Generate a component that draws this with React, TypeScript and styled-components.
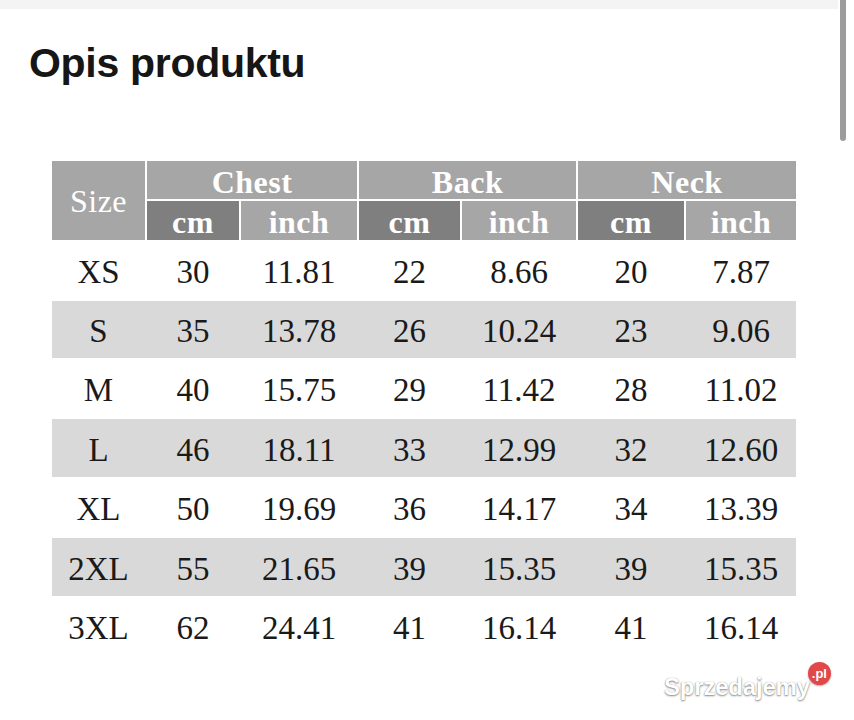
import React from 'react';
import styled, { createGlobalStyle } from 'styled-components';

const GlobalStyle = createGlobalStyle`
    html, body {
        margin: 0;
        padding: 0;
        background: #FFFFFF;
    }
`;

// 페이지 전체
const Page = styled.div`
    position: relative;
    width: 854px;
    height: 720px;
    overflow: hidden;
    background: #FFFFFF;
`;

// 위쪽 회색 띠
const TopStrip = styled.div`
    width: 838px;
    height: 9px;
    background: #F4F4F4;
`;

// 스크롤바 (위에 겹침)
const ScrollThumb = styled.div`
    position: absolute;
    left: 840px;
    top: 0;
    width: 6px;
    height: 141px;
    border-radius: 0 0 3px 3px;
    background: #9C9C9C;
`;

const Content = styled.div`
    display: flex;
    flex-direction: column;
    padding: 30px 0 0 29px;
`;

const Title = styled.h1`
    margin: 0;
    font-family: 'Liberation Sans', Arial, sans-serif;
    font-size: 41px;
    font-weight: 700;
    line-height: 48px;
    color: #161616;
    letter-spacing: -0.3px;
`;

const Table = styled.div`
    display: flex;
    flex-direction: column;
    margin: 74px 0 0 23px;
    width: 744px;
`;

const COLS = '93px 92px 116px 101px 114px 106px 110px';

const Head = styled.div`
    display: grid;
    grid-template-columns: ${COLS};
    grid-template-rows: 38px 39px;
    gap: 2px;
    background: #FFFFFF;
`;

const HeadCell = styled.div<{ $dark?: boolean; $span?: number; $rows?: number; $bold?: boolean }>`
    display: flex;
    align-items: center;
    justify-content: center;
    padding-top: ${(p) => (p.$rows ? '0' : '3px')};
    box-sizing: border-box;
    grid-column: span ${(p) => p.$span ?? 1};
    grid-row: span ${(p) => p.$rows ?? 1};
    background: ${(p) => (p.$dark ? '#7F7F7F' : '#A6A6A6')};
    color: #FFFFFF;
    font-family: 'Liberation Serif', 'Times New Roman', serif;
    font-size: 32px;
    font-weight: ${(p) => (p.$bold === false ? 400 : 700)};
    letter-spacing: 0.5px;
    line-height: 1;
`;

const Row = styled.div<{ $shade: boolean; $h: number }>`
    display: grid;
    grid-template-columns: ${COLS};
    column-gap: 2px;
    height: ${(p) => p.$h}px;
    background: ${(p) => (p.$shade ? '#D9D9D9' : '#FFFFFF')};
`;

const Cell = styled.div`
    display: flex;
    align-items: center;
    justify-content: center;
    padding-top: 4px;
    font-family: 'Liberation Serif', 'Times New Roman', serif;
    font-size: 33px;
    color: #1A1A1A;
    line-height: 1;
`;

// 워터마크
const Watermark = styled.div`
    position: absolute;
    left: 664px;
    top: 662px;
    display: flex;
    align-items: flex-start;
`;

const MarkText = styled.span`
    font-family: 'Liberation Sans', Arial, sans-serif;
    font-size: 24px;
    font-weight: 700;
    color: #FFFFFF;
    letter-spacing: -0.2px;
    text-shadow: 0 1px 2px rgba(0, 0, 0, 0.45), 0 0 1px rgba(0, 0, 0, 0.35);
    margin-top: 11px;
`;

const MarkBadge = styled.span`
    display: flex;
    align-items: center;
    justify-content: center;
    width: 23px;
    height: 23px;
    margin-left: -2px;
    border-radius: 50%;
    background: #E2484A;
    color: #FFFFFF;
    font-family: 'Liberation Sans', Arial, sans-serif;
    font-size: 13px;
    font-weight: 700;
    box-shadow: 0 1px 2px rgba(0, 0, 0, 0.3);
`;

const rows: string[][] = [
    ['XS', '30', '11.81', '22', '8.66', '20', '7.87'],
    ['S', '35', '13.78', '26', '10.24', '23', '9.06'],
    ['M', '40', '15.75', '29', '11.42', '28', '11.02'],
    ['L', '46', '18.11', '33', '12.99', '32', '12.60'],
    ['XL', '50', '19.69', '36', '14.17', '34', '13.39'],
    ['2XL', '55', '21.65', '39', '15.35', '39', '15.35'],
    ['3XL', '62', '24.41', '41', '16.14', '41', '16.14'],
];

const heights = [61, 57, 61, 58, 61, 58, 61];

export default function App(): JSX.Element {
    return (
        <Page>
            <GlobalStyle />
            <TopStrip />
            <ScrollThumb />
            <Content>
                <Title>Opis produktu</Title>
                <Table>
                    <Head>
                        <HeadCell $rows={2} $bold={false}>Size</HeadCell>
                        <HeadCell $span={2}>Chest</HeadCell>
                        <HeadCell $span={2}>Back</HeadCell>
                        <HeadCell $span={2}>Neck</HeadCell>
                        <HeadCell $dark>cm</HeadCell>
                        <HeadCell>inch</HeadCell>
                        <HeadCell $dark>cm</HeadCell>
                        <HeadCell>inch</HeadCell>
                        <HeadCell $dark>cm</HeadCell>
                        <HeadCell>inch</HeadCell>
                    </Head>
                    {rows.map((r, i) => (
                        <Row key={r[0]} $shade={i % 2 === 1} $h={heights[i]}>
                            {r.map((v, j) => (
                                <Cell key={j}>{v}</Cell>
                            ))}
                        </Row>
                    ))}
                </Table>
            </Content>
            <Watermark>
                <MarkText>Sprzedajemy</MarkText>
                <MarkBadge>.pl</MarkBadge>
            </Watermark>
        </Page>
    );
}
